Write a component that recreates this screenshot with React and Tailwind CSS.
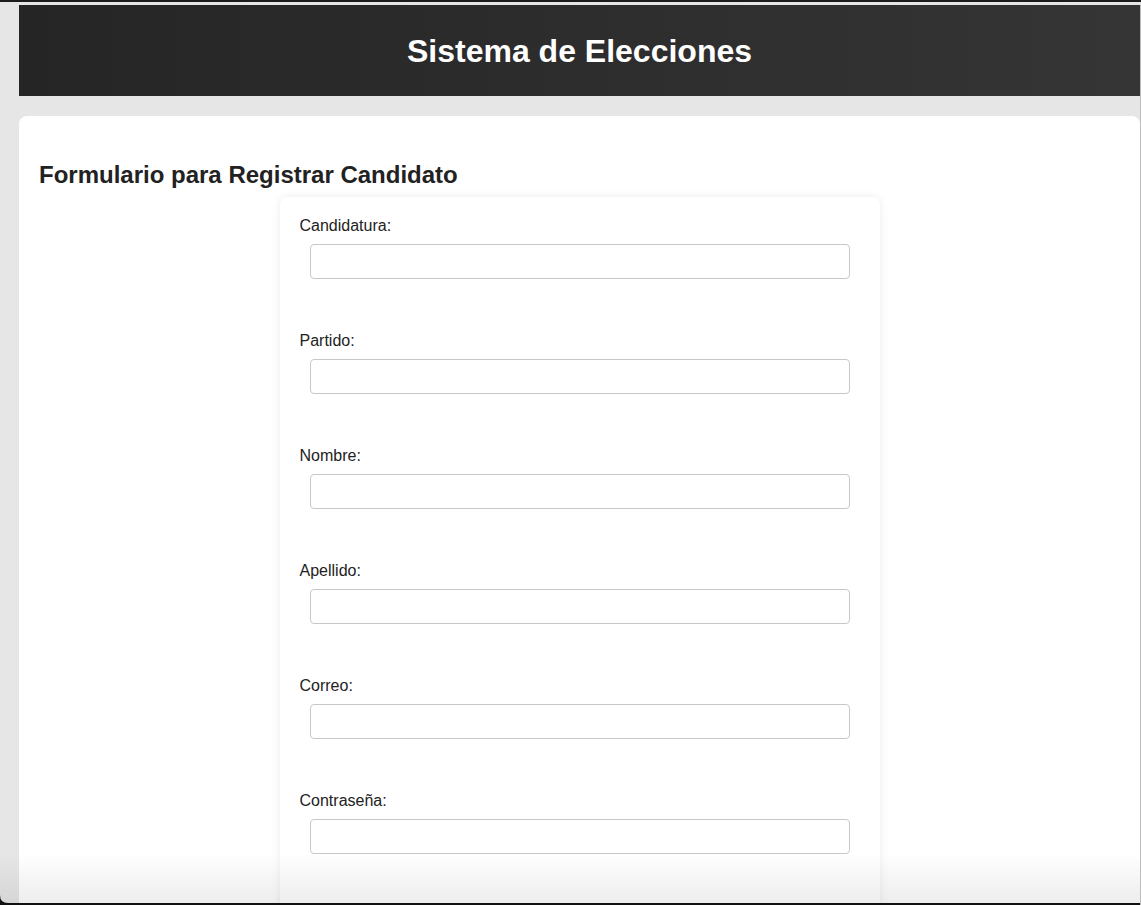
import React from "react";

const fields = ["Candidatura:", "Partido:", "Nombre:", "Apellido:", "Correo:", "Contraseña:"];

export default function App() {
  return (
    <div
      className="relative w-[1141px] h-[905px] overflow-hidden bg-[#e6e6e6] text-[#222]"
      style={{ fontFamily: '"Liberation Sans", Arial, Helvetica, sans-serif' }}
    >
      <div className="h-[2px] bg-[#1c1c1c]" />
      <div className="pt-[3px] pl-[19px] pr-[1px]">
        <header className="h-[91px] flex items-center justify-center bg-gradient-to-r from-[#252525] to-[#353535]">
          <h1 className="text-[32px] font-bold text-white leading-none">Sistema de Elecciones</h1>
        </header>
        <main className="mt-[20px] bg-white rounded-t-[8px] px-[20px] pt-[45px] pb-[40px]">
          <h2 className="text-[24px] font-bold leading-[28px] text-[#222]">Formulario para Registrar Candidato</h2>
          <form className="mt-[8px] mx-auto w-[600px] rounded-[8px] bg-white px-[20px] pt-[20px] pb-[40px] shadow-[0_0_10px_rgba(0,0,0,0.08)]">
            {fields.map((f) => (
              <div key={f} className="mb-[53px]">
                <label className="block text-[16px] leading-[18px] text-[#222]">{f}</label>
                <div className="mt-[9px] px-[10px]">
                  <input
                    type={f.startsWith("Contra") ? "password" : "text"}
                    className="block w-full h-[35px] rounded-[4px] border border-[#c8c8c8] bg-white outline-none"
                  />
                </div>
              </div>
            ))}
          </form>
        </main>
      </div>
      <div className="pointer-events-none absolute left-0 right-0 bottom-[2px] h-[50px] bg-gradient-to-b from-[rgba(0,0,0,0)] to-[rgba(0,0,0,0.07)]" />
      <div className="absolute left-0 right-0 bottom-0 h-[2px] bg-[#111]" />
      <div className="absolute left-0 bottom-[2px] w-[8px] h-[8px] bg-[#111]" style={{ clipPath: "path('M0 0 Q0 8 8 8 L0 8 Z')" }} />
      <div className="absolute top-[5px] bottom-0 right-0 w-[1px] bg-[#bdbdbd]" />
    </div>
  );
}
